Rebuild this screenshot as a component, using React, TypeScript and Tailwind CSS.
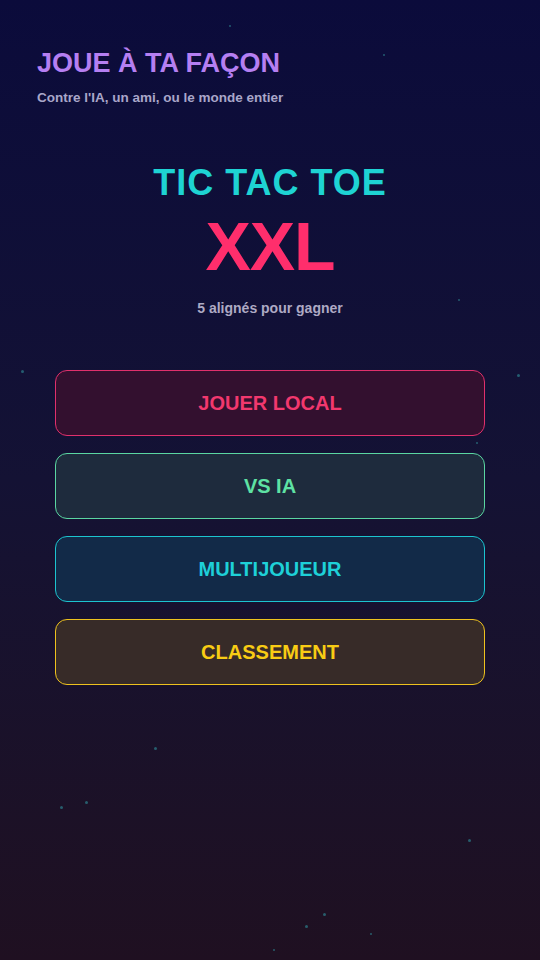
import React from "react";

const stars = [
  { x: 229, y: 25, s: 2 },
  { x: 383, y: 54, s: 2 },
  { x: 458, y: 299, s: 2 },
  { x: 21, y: 370, s: 3 },
  { x: 517, y: 374, s: 3 },
  { x: 476, y: 442, s: 2 },
  { x: 154, y: 747, s: 3 },
  { x: 85, y: 801, s: 3 },
  { x: 60, y: 806, s: 3 },
  { x: 468, y: 839, s: 3 },
  { x: 323, y: 913, s: 3 },
  { x: 305, y: 925, s: 3 },
  { x: 370, y: 933, s: 2 },
  { x: 273, y: 949, s: 2 },
];

const modes = [
  {
    label: "JOUER LOCAL",
    box: "border-[#e0306c] bg-[#33102f] text-[#f2386e]",
  },
  {
    label: "VS IA",
    box: "border-[#5ad6a2] bg-[#1e2b3d] text-[#5ee2a4]",
  },
  {
    label: "MULTIJOUEUR",
    box: "border-[#1cc4cf] bg-[#122a48] text-[#1ed0d8]",
  },
  {
    label: "CLASSEMENT",
    box: "border-[#eec21e] bg-[#372b28] text-[#f8cc14]",
  },
];

export default function App() {
  return (
    <div
      className="relative h-[960px] w-full overflow-hidden bg-linear-to-b from-[#0b0b3b] via-[#141234] to-[#1f1021]"
      style={{ fontFamily: '"Liberation Sans", Arial, sans-serif' }}
    >
      {stars.map((star, i) => (
        <span
          key={i}
          className="absolute rounded-full bg-[#2c7d8a] opacity-70"
          style={{ left: star.x, top: star.y, width: star.s, height: star.s }}
        />
      ))}

      <div className="relative flex flex-col">
        <header className="px-[37px] pt-[47px]">
          <h1 className="text-[27px] font-bold leading-[32px] text-[#b57ff2]">
            JOUE À TA FAÇON
          </h1>
          <p className="mt-[11px] text-[13.5px] font-bold leading-[16px] text-[#a9a6c9]">
            Contre l'IA, un ami, ou le monde entier
          </p>
        </header>

        <section className="mt-[57px] flex flex-col items-center">
          <h2 className="text-[36px] font-bold leading-[40px] tracking-[1px] text-[#1ed3d3]">
            TIC TAC TOE
          </h2>
          <div className="mt-[8px] text-[68px] font-bold leading-[70px] tracking-[-1px] text-[#ff2e6c]">
            XXL
          </div>
          <p className="mt-[19px] text-[14px] font-bold leading-[16px] text-[#aeaac4]">
            5 alignés pour gagner
          </p>
        </section>

        <nav className="mt-[54px] flex flex-col gap-[17px] px-[55px]">
          {modes.map((mode) => (
            <button
              key={mode.label}
              type="button"
              className={`flex h-[66px] w-full items-center justify-center rounded-[12px] border-[1.5px] text-[20px] font-bold ${mode.box}`}
            >
              {mode.label}
            </button>
          ))}
        </nav>
      </div>
    </div>
  );
}
